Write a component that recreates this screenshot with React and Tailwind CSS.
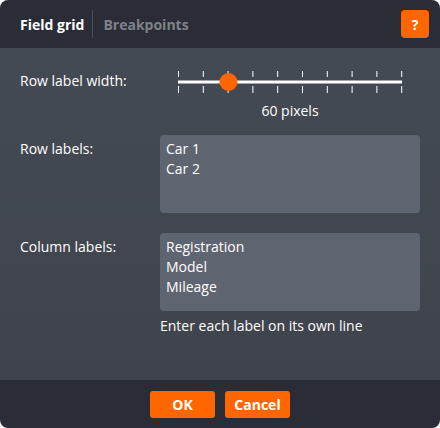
import React from "react";

const ticks = [0, 1, 2, 3, 4, 5, 6, 7, 8, 9];

function Slider() {
  return (
    <div className="flex flex-col items-center w-[240px] ml-[10px]">
      <svg width="240" height="26" viewBox="0 0 240 26">
        {ticks.map((t) => {
          const x = 8.5 + t * 24.8;
          return (
            <g key={t} stroke="#ffffff" strokeWidth="1">
              <line x1={x} y1="3" x2={x} y2="9" />
              <line x1={x} y1="18" x2={x} y2="25" />
            </g>
          );
        })}
        <line x1="8" y1="14" x2="232" y2="14" stroke="#ffffff" strokeWidth="3" />
        <circle cx="58.5" cy="14" r="9" fill="#ff6600" />
      </svg>
      <div className="text-[14px] text-white mt-[7px] leading-5">60 pixels</div>
    </div>
  );
}

export default function App() {
  return (
    <div
      className="w-[440px] h-[428px] bg-white"
      style={{ fontFamily: '"Open Sans", "Noto Sans", sans-serif' }}
    >
      <div className="w-full h-full rounded-[8px] overflow-hidden flex flex-col">
        {/* Header */}
        <div className="h-[48px] bg-[#2a2d35] flex items-center pl-[20px] pr-[11px]">
          <span className="text-white font-bold text-[14px]">Field grid</span>
          <div className="w-px h-[28px] bg-[#4a4e57] ml-[8px] mr-[10px]" />
          <span className="text-[#7e828a] font-bold text-[14px]">Breakpoints</span>
          <button className="ml-auto w-[28px] h-[28px] rounded-[4px] bg-[#ff6600] text-white font-bold text-[14px] flex items-center justify-center">
            ?
          </button>
        </div>

        {/* Body */}
        <div className="flex-1 bg-gradient-to-b from-[#444a53] to-[#3f444c] px-[20px] text-white text-[14px]">
          <div className="flex items-start pt-[20px]">
            <div className="w-[140px] mt-[3px] leading-5">Row label width:</div>
            <Slider />
          </div>

          <div className="flex items-start mt-[14px]">
            <div className="w-[140px] mt-[4px] leading-5">Row labels:</div>
            <div className="w-[260px] h-[78px] rounded-[4px] bg-[#5e6570] px-[6px] py-[4px] leading-5">
              <div>Car 1</div>
              <div>Car 2</div>
            </div>
          </div>

          <div className="flex items-start mt-[20px]">
            <div className="w-[140px] mt-[4px] leading-5">Column labels:</div>
            <div className="flex flex-col">
              <div className="w-[260px] h-[78px] rounded-[4px] bg-[#5e6570] px-[6px] py-[4px] leading-5">
                <div>Registration</div>
                <div>Model</div>
                <div>Mileage</div>
              </div>
              <div className="mt-[5px] leading-5">Enter each label on its own line</div>
            </div>
          </div>
        </div>

        {/* Footer */}
        <div className="h-[48px] bg-[#2a2d35] flex items-center justify-center gap-[10px]">
          <button className="w-[65px] h-[27px] rounded-[3px] bg-[#ff6600] text-white font-bold text-[14px]">
            OK
          </button>
          <button className="w-[65px] h-[27px] rounded-[3px] bg-[#ff6600] text-white font-bold text-[14px]">
            Cancel
          </button>
        </div>
      </div>
    </div>
  );
}
